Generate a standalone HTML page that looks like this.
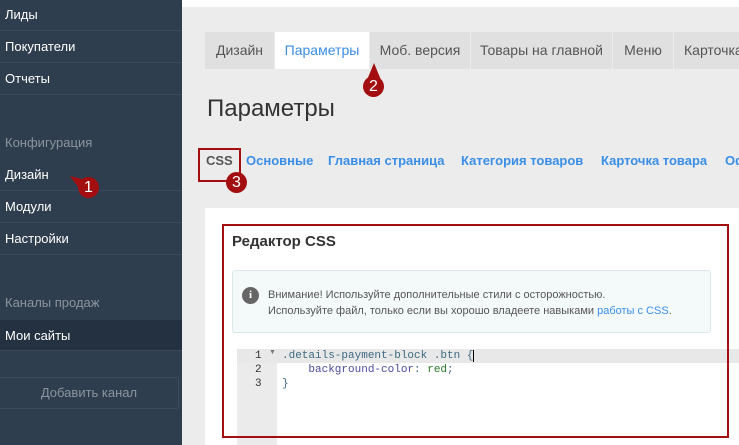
<!DOCTYPE html>
<html><head><meta charset="utf-8"><style>
*{margin:0;padding:0;box-sizing:border-box}
html,body{width:739px;height:445px;overflow:hidden}
body{position:relative;background:#ececec;font-family:"Liberation Sans","DejaVu Sans",sans-serif}
.sb{position:absolute;left:0;top:0;width:182px;height:445px;background:#2f3e4e}
.it{position:absolute;left:0;width:182px;height:32px;color:#fff;font-size:13px;padding-left:5px;line-height:32px;border-bottom:1px solid #3b4a5a}
.gr{color:#8a949e;border:none}
.abs{position:absolute}
.tab{position:absolute;top:32px;height:37px;background:#e0e0e0;color:#555;font-size:14px;line-height:37px;text-align:center;white-space:nowrap;overflow:hidden}
.sub{position:absolute;top:153px;font-size:13px;font-weight:bold;color:#3a8ee6;white-space:nowrap}
.badge{position:absolute;width:21px;height:21px;border-radius:50%;background:#a30f10;color:#fff;font-size:16px;line-height:21px;text-align:center}
.mono{font-family:"Liberation Mono","DejaVu Sans Mono",monospace;font-size:11px}
</style></head><body>
<div class="sb">
<div class="it" style="top:0;height:31px;line-height:30px">Лиды</div>
<div class="it" style="top:31px">Покупатели</div>
<div class="it" style="top:63px">Отчеты</div>
<div class="it gr" style="top:127px">Конфигурация</div>
<div class="it" style="top:159px">Дизайн</div>
<div class="it" style="top:191px">Модули</div>
<div class="it" style="top:223px">Настройки</div>
<div class="it gr" style="top:287px">Каналы продаж</div>
<div class="it" style="top:320px;background:#243140;height:31px;line-height:31px">Мои сайты</div>
<div class="abs" style="left:0;top:377px;width:179px;height:32px;border:1px solid #3d4c5c;border-left:none;border-radius:0 3px 3px 0;color:#8a949e;font-size:13px;line-height:30px;text-align:center">Добавить канал</div>
</div>
<div class="abs" style="left:182px;top:0;width:557px;height:7px;background:#fff"></div>
<div class="tab" style="left:205px;width:69px">Дизайн</div>
<div class="tab" style="left:275px;width:94px;background:#fff;color:#3a8ee6">Параметры</div>
<div class="tab" style="left:370px;width:100px">Моб. версия</div>
<div class="tab" style="left:471px;width:141px">Товары на главной</div>
<div class="tab" style="left:613px;width:60px">Меню</div>
<div class="tab" style="left:674px;width:65px;text-align:left;padding-left:10px">Карточка</div>
<div class="abs" style="left:207px;top:95px;font-size:24px;color:#333">Параметры</div>
<div class="abs" style="left:0;top:0;width:739px;height:445px;overflow:hidden">
<div class="sub" style="left:206px;color:#555">CSS</div>
<div class="sub" style="left:246px">Основные</div>
<div class="sub" style="left:328px">Главная страница</div>
<div class="sub" style="left:461px">Категория товаров</div>
<div class="sub" style="left:601px">Карточка товара</div>
<div class="sub" style="left:725px">Оформление</div>
</div>
<div class="abs" style="left:198px;top:148px;width:43px;height:34px;border:2px solid #a30f10"></div>
<div class="abs" style="left:205px;top:208px;width:534px;height:237px;background:#fff"></div>
<div class="abs" style="left:232px;top:233px;font-size:15px;font-weight:bold;color:#333">Редактор CSS</div>
<div class="abs" style="left:232px;top:270px;width:479px;height:63px;background:#f4f9fa;border:1px solid #dde8ea;border-radius:3px"></div>
<div class="abs" style="left:242px;top:287px;width:17px;height:17px;border-radius:50%;background:#666;color:#fff;font-size:11px;font-weight:bold;text-align:center;line-height:17px;font-family:'Liberation Serif',serif">i</div>
<div class="abs" style="left:268px;top:287px;font-size:11px;color:#555;line-height:16px">Внимание! Используйте дополнительные стили с осторожностью.<br>Используйте файл, только если вы хорошо владеете навыками <span style="color:#3a8ee6">работы с CSS</span>.</div>
<div class="abs" style="left:237px;top:349px;width:40px;height:96px;background:#ebebeb"></div>
<div class="abs" style="left:237px;top:349px;width:502px;height:14px;background:#e8e8e8"></div>
<div class="abs mono" style="left:255px;top:349px;line-height:14px;color:#333">1<br>2<br>3</div>
<div class="abs" style="left:269px;top:349px;font-size:7px;color:#777">▼</div>
<div class="abs mono" style="left:282px;top:349px;line-height:14px;color:#3d6a80;white-space:pre">.details-payment-block .btn {<span style="border-left:1px solid #000"></span>
    <span style="color:#4a4aa0">background-color</span>: <span style="color:#2a7a2a">red</span>;
}</div>
<div class="abs" style="left:222px;top:224px;width:507px;height:214px;border:2px solid #a30f10"></div>
<svg class="abs" style="left:0;top:0" width="739" height="445"><polygon points="70,176 86,180 82,192" fill="#a30f10"/><polygon points="374,63 367,80 381,80" fill="#a30f10"/></svg>
<div class="badge" style="left:78px;top:177px">1</div>
<div class="badge" style="left:363px;top:76px">2</div>
<div class="badge" style="left:226px;top:172px">3</div>
</body></html>
